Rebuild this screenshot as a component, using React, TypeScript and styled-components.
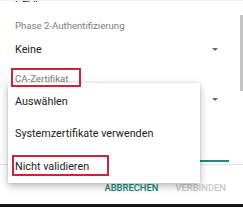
import React from 'react';
import styled, { createGlobalStyle } from 'styled-components';

const GlobalStyle = createGlobalStyle`
  html, body {
    margin: 0;
    padding: 0;
    background: #fff;
  }
  body {
    font-family: Roboto, "Noto Sans", "Liberation Sans", sans-serif;
  }
`;

const Page = styled.div`
  position: relative;
  width: 243px;
  height: 207px;
  overflow: hidden;
  background: #161616;
`;

const Dialog = styled.div`
  display: flex;
  flex-direction: column;
  width: 243px;
  height: 204px;
  background: #fff;
`;

const ScrollArea = styled.div`
  position: relative;
  height: 165px;
  overflow: hidden;
  border-top: 1px solid #efefef;
  border-bottom: 1px solid #e4e4e4;
  box-sizing: border-box;
`;

const Content = styled.div`
  display: flex;
  flex-direction: column;
  margin-top: -9px;
  padding: 0 14px 0 15px;
`;

const FieldLabel = styled.div<{ $gap: number }>`
  margin-top: ${(p) => p.$gap}px;
  font-size: 9.6px;
  line-height: 12px;
  color: #7c7c7c;
`;

const Spinner = styled.div<{ $gap: number }>`
  display: flex;
  align-items: center;
  justify-content: space-between;
  margin-top: ${(p) => p.$gap}px;
  height: 14px;
  font-size: 10.8px;
  line-height: 14px;
  color: #212121;
`;

const Caret = styled.span`
  width: 0;
  height: 0;
  margin: 0 11px 2px 0;
  border-left: 3px solid transparent;
  border-right: 3px solid transparent;
  border-top: 3px solid #666;
`;

const TextInput = styled.div`
  margin-top: 33px;
  height: 20px;
  border-bottom: 2px solid #1f8a7d;
`;

const Scrollbar = styled.div`
  position: absolute;
  right: 0;
  top: 14px;
  width: 3px;
  height: 76px;
  background: #c4c4c4;
`;

const ButtonBar = styled.div`
  display: flex;
  justify-content: flex-end;
  align-items: center;
  gap: 17px;
  flex: 1;
  padding: 6px 17px 0 0;
`;

const TextButton = styled.span<{ $disabled?: boolean }>`
  font-size: 9.4px;
  font-weight: 500;
  color: ${(p) => (p.$disabled ? '#c9c9c9' : '#1d8577')};
`;

const Menu = styled.div`
  position: absolute;
  left: 8px;
  top: 83px;
  width: 192px;
  padding-top: 2px;
  background: #fff;
  box-shadow: 0 3px 8px rgba(0, 0, 0, 0.28), 0 0 2px rgba(0, 0, 0, 0.12);
`;

const MenuItem = styled.div`
  display: flex;
  align-items: center;
  height: 32.5px;
  padding-left: 7px;
  font-size: 10.8px;
  color: #212121;
`;

const Highlight = styled.div<{ $x: number; $y: number; $w: number; $h: number }>`
  position: absolute;
  left: ${(p) => p.$x}px;
  top: ${(p) => p.$y}px;
  width: ${(p) => p.$w}px;
  height: ${(p) => p.$h}px;
  box-sizing: border-box;
  border: 2px solid #c6283b;
  pointer-events: none;
`;

const App: React.FC = () => {
  return (
    <>
      <GlobalStyle />
      <Page>
        <Dialog>
          <ScrollArea>
            <Content>
              <Spinner $gap={0}>PEAP</Spinner>
              <FieldLabel $gap={14}>Phase 2-Authentifizierung</FieldLabel>
              <Spinner $gap={11}>
                Keine
                <Caret />
              </Spinner>
              <FieldLabel $gap={16}>CA-Zertifikat</FieldLabel>
              <Spinner $gap={8}>
                Auswählen
                <Caret />
              </Spinner>
              <TextInput />
            </Content>
            <Scrollbar />
          </ScrollArea>
          <ButtonBar>
            <TextButton>ABBRECHEN</TextButton>
            <TextButton $disabled>VERBINDEN</TextButton>
          </ButtonBar>
        </Dialog>

        <Menu>
          <MenuItem>Auswählen</MenuItem>
          <MenuItem>Systemzertifikate verwenden</MenuItem>
          <MenuItem>Nicht validieren</MenuItem>
        </Menu>

        <Highlight $x={11} $y={68} $w={70} $h={19} />
        <Highlight $x={12} $y={155} $w={97} $h={21} />
      </Page>
    </>
  );
};

export default App;
